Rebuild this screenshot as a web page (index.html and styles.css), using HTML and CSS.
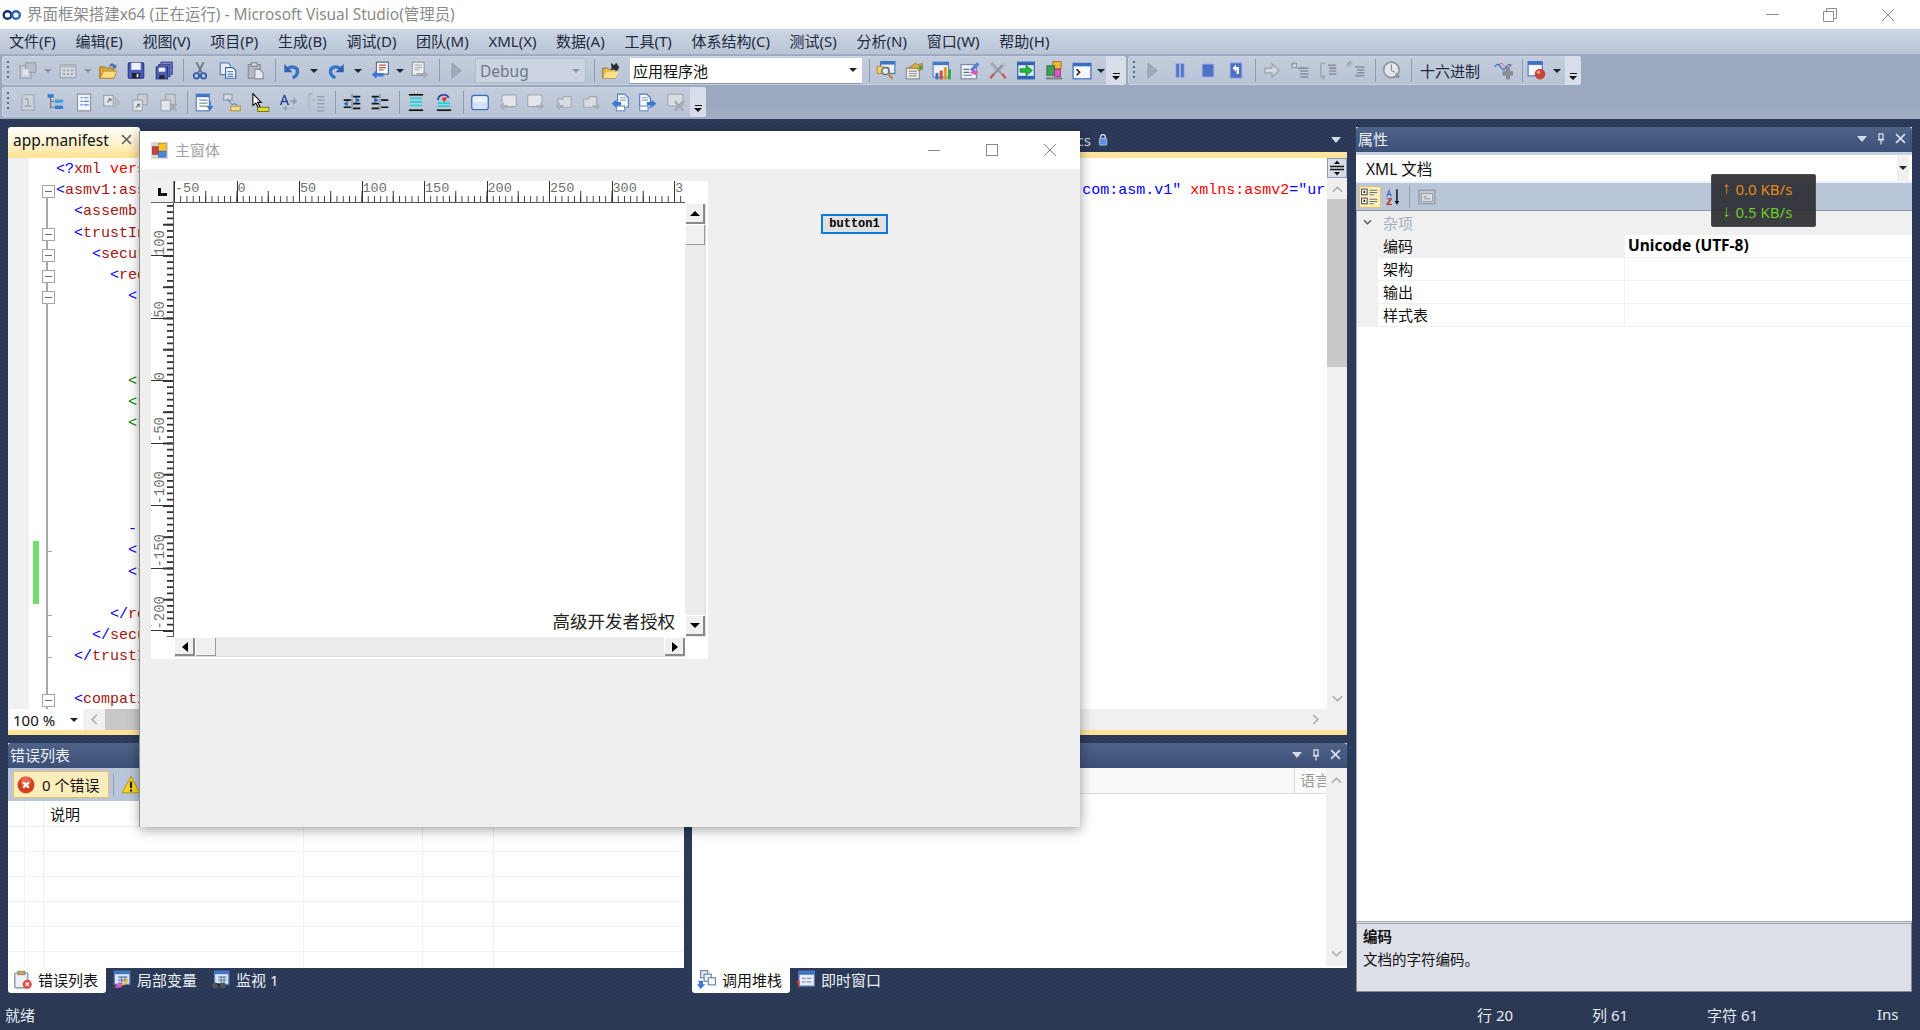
FILE: index.html
```html
<!DOCTYPE html>
<html lang="zh-CN">
<head>
<meta charset="utf-8">
<title>界面框架搭建x64 (正在运行) - Microsoft Visual Studio(管理员)</title>
<link rel="stylesheet" href="styles.css">
</head>
<body>
<svg class="defs" xmlns="http://www.w3.org/2000/svg">
<symbol id="newp" viewBox="0 0 16 16"><rect x="1.5" y="4" width="9" height="10.5" fill="#ccd1d8" stroke="#8d939d"/><rect x="6" y="1.5" width="8.5" height="8" fill="#b5bbc4" stroke="#8d939d"/><rect x="3.5" y="7" width="5" height="5" fill="#eef0f3"/></symbol>
<symbol id="addi" viewBox="0 0 16 16"><rect x="1.5" y="3" width="13" height="11" fill="#dde0e5" stroke="#979da7"/><rect x="1.5" y="3" width="13" height="2.5" fill="#aeb4bd"/><path d="M4 8h1.500M7.300 8h1.500M10.600 8h1.500M4 11h1.500M7.300 11h1.500M10.600 11h1.500" stroke="#7d838d" stroke-width="1.400"/></symbol>
<symbol id="open" viewBox="0 0 16 16"><path d="M1 5h5l1 1h6v8.500H1z" fill="#d9a93c" stroke="#9b7424" stroke-width=".8"/><path d="M1.500 14.500l2.500-6h11.500l-2.500 6z" fill="#fbdc85" stroke="#b48a2e" stroke-width=".8"/><path d="M9 3.500c1.500-2 3.500-2 5 0l1-1v3.500h-3.500l1-1c-1-1-2-1-3 0z" fill="#4a73b5"/></symbol>
<symbol id="save" viewBox="0 0 16 16"><rect x="1.500" y="1.500" width="13" height="13" rx="1" fill="#4d5db8" stroke="#2b3684"/><rect x="4" y="1.500" width="8" height="6" fill="#eef1f8"/><rect x="4.500" y="10" width="7" height="4.500" fill="#20232e"/><rect x="8.500" y="10.800" width="1.600" height="3" fill="#d9dce5"/></symbol>
<symbol id="saveall" viewBox="0 0 16 16"><rect x="5.500" y="1" width="9.500" height="10" fill="#7e89c8" stroke="#3f4a94"/><rect x="3.500" y="3" width="9.500" height="10" fill="#6672bf" stroke="#3f4a94"/><rect x="1.500" y="5" width="9.500" height="10" fill="#4d5db8" stroke="#2b3684"/><rect x="3.500" y="5.500" width="5.500" height="3.500" fill="#eef1f8"/><rect x="4" y="12" width="4.500" height="3" fill="#20232e"/></symbol>
<symbol id="cut" viewBox="0 0 16 16"><path d="M5 1l4.500 9M11 1L6.500 10" stroke="#6d7481" stroke-width="1.500" fill="none"/><circle cx="5" cy="12.500" r="2.300" fill="none" stroke="#2f5ea8" stroke-width="1.500"/><circle cx="11" cy="12.500" r="2.300" fill="none" stroke="#2f5ea8" stroke-width="1.500"/></symbol>
<symbol id="copy" viewBox="0 0 16 16"><path d="M1.500 1.500h6.500l2 2v8h-8.500z" fill="#e9effa" stroke="#5d80b8"/><path d="M6 5.500h6l2.500 2.500v6.500H6z" fill="#fff" stroke="#3d6bb0"/><path d="M7.500 9h5M7.500 11h5M7.500 13h5" stroke="#5d80b8"/></symbol>
<symbol id="paste" viewBox="0 0 16 16"><rect x="1.500" y="3" width="10" height="11.500" fill="#b3b8c0" stroke="#878d97"/><rect x="4" y="1.500" width="5" height="3" fill="#d3d6db" stroke="#878d97"/><path d="M7 7h4l3 3v5H7z" fill="#e7e9ec" stroke="#8b919b"/></symbol>
<symbol id="undo" viewBox="0 0 16 16"><path d="M4 6.500c5-3.500 9.500-.5 8.500 3.500-.5 2-2 3.500-4 4" fill="none" stroke="#3873c8" stroke-width="2.800"/><path d="M1.500 2.500v7h7z" fill="#2d63b5"/></symbol>
<symbol id="redo" viewBox="0 0 16 16"><path d="M12 6.500c-5-3.500-9.500-.5-8.500 3.500.5 2 2 3.500 4 4" fill="none" stroke="#3873c8" stroke-width="2.800"/><path d="M14.500 2.500v7h-7z" fill="#2d63b5"/></symbol>
<symbol id="nav" viewBox="0 0 16 16"><rect x="5" y="1" width="10" height="10" fill="#fff" stroke="#5a6b8a"/><path d="M7 3.500h6M7 5.500h6M7 7.500h4" stroke="#b05a50"/><path d="M1 11.500l4-3.500v2h6v3H5v2z" fill="#3a78d3"/></symbol>
<symbol id="navg" viewBox="0 0 16 16"><rect x="1.500" y="1" width="10" height="11" fill="#eef0f2" stroke="#989ea7"/><path d="M3.500 3.500h6M3.500 5.500h6M3.500 7.500h4" stroke="#a9aeb6"/><path d="M15 11.500l-4-3.500v2H5v3h6v2z" fill="#a4aab3"/></symbol>
<symbol id="play" viewBox="0 0 16 16"><path d="M4.500 1.500l8 6.500-8 6.500z" fill="#a2aab7" stroke="#8b929f" stroke-width=".5"/></symbol>
<symbol id="find" viewBox="0 0 16 16"><path d="M1 6h4l1 1h6v7.500H1z" fill="#e6b94b" stroke="#93702a" stroke-width=".8"/><path d="M1.500 14.500L4 9h10l-2 5.500z" fill="#fbdf8a"/><path d="M8 1.500l2.500 2 2-2 2.500 4-2 3-2.500-1.500-2 1z" fill="#2b2e38"/></symbol>
<symbol id="search" viewBox="0 0 16 16"><rect x="3.500" y=".5" width="12" height="10" fill="#e9eff9" stroke="#4e79b8"/><rect x="3.500" y=".5" width="12" height="2.500" fill="#3c74c6"/><path d="M.5 4.500h5l1 1h4v5h-10z" fill="#f4cd66" stroke="#a78232" stroke-width=".7"/><circle cx="7.500" cy="8.500" r="3" fill="#d9ebfb" stroke="#5d6673" stroke-width="1.200"/><path d="M9.500 10.500l4 4.500" stroke="#b78a35" stroke-width="2"/></symbol>
<symbol id="prop" viewBox="0 0 16 16"><rect x="1.500" y="6" width="11" height="9" fill="#f2f0e8" stroke="#8a8d92"/><path d="M3.500 8.500h7M3.500 10.500h7M3.500 12.500h7" stroke="#8b909a"/><path d="M3 6l6-4 3 1 3-1v5l-3 1-2-2z" fill="#d9ae44" stroke="#8d6d2a" stroke-width=".6"/><path d="M12 4h3v3h-3z" fill="#3aa24c"/></symbol>
<symbol id="chart" viewBox="0 0 16 16"><rect x=".5" y="1" width="13" height="12.500" fill="#eef3fb" stroke="#5e83bb"/><rect x=".5" y="1" width="13" height="2.500" fill="#3f78c9"/><rect x="6" y="8" width="2.500" height="7.500" fill="#d5493c"/><rect x="9.500" y="5" width="2.500" height="10.500" fill="#e49b2c"/><rect x="13" y="7" width="2.500" height="8.500" fill="#3ba44e"/><rect x="2.500" y="10" width="2.500" height="5.500" fill="#3873c8"/></symbol>
<symbol id="docp" viewBox="0 0 16 16"><rect x=".5" y="3" width="13" height="12" fill="#f1f3f8" stroke="#7d8aa0"/><path d="M2.500 7h5M2.500 9.500h5M2.500 12h7" stroke="#5c6f90"/><path d="M8 7l6-6 2 2-6 6z" fill="#4c86dc"/><path d="M8 10l3-3 4 2-2 3z" fill="#d95cc4"/></symbol>
<symbol id="tools" viewBox="0 0 16 16"><path d="M2.500 2l9 9" stroke="#9aa0a8" stroke-width="2"/><path d="M11.500 11l3 3.500" stroke="#c9574d" stroke-width="2"/><path d="M13.500 2l-9 9" stroke="#8f949c" stroke-width="2"/><path d="M4.500 11l-3 3.500" stroke="#c9574d" stroke-width="2"/><path d="M1 2l3-1 2.500 3-2 2z" fill="#a7acb4"/><path d="M10.500 2l2.500-1.500 2.500 2.500-2 2.500z" fill="#bcc0c6"/></symbol>
<symbol id="green" viewBox="0 0 16 16"><rect x="1" y="1" width="14" height="14" fill="#dfe9f8" stroke="#3560a8"/><rect x="1" y="1" width="14" height="2.500" fill="#2f62b4"/><rect x="1" y="12.500" width="14" height="2.500" fill="#2f62b4"/><path d="M3 6.500h5V3.500l5.500 4.500L8 12.500v-3H3z" fill="#22b83a" stroke="#108326" stroke-width=".6"/></symbol>
<symbol id="cls" viewBox="0 0 16 16"><rect x="7" y=".5" width="7" height="6" fill="#f2b632" stroke="#8d6c1d" stroke-width=".7"/><rect x="2" y="4" width="6.500" height="8" fill="#3f9e53" stroke="#246d35" stroke-width=".7"/><rect x="8.500" y="7" width="5" height="6" fill="#dd57c3" stroke="#9b3286" stroke-width=".7"/><rect x="1" y="13.800" width="14" height="1.700" fill="#7d7f84"/></symbol>
<symbol id="cmd" viewBox="0 0 16 16"><rect x=".5" y="2" width="15" height="13" fill="#f5f7fb" stroke="#3a6ec0"/><rect x=".5" y="2" width="15" height="2.500" fill="#3a6ec0"/><path d="M3.500 7l2.500 2.500-2.500 2.500" fill="none" stroke="#1a1a1a" stroke-width="1.300"/></symbol>
<symbol id="pause" viewBox="0 0 16 16"><rect x="4.500" y="2" width="3" height="12" fill="#5576c8" stroke="#a3b6e2" stroke-width=".6"/><rect x="8.500" y="2" width="3" height="12" fill="#5576c8" stroke="#a3b6e2" stroke-width=".6"/></symbol>
<symbol id="stop" viewBox="0 0 16 16"><rect x="3" y="2.500" width="10" height="11" fill="#4d70c4" stroke="#a3b6e2" stroke-width=".8"/></symbol>
<symbol id="restart" viewBox="0 0 16 16"><rect x="3" y="1.500" width="10" height="13" fill="#4d70c4" stroke="#a3b6e2" stroke-width=".8"/><path d="M5 6l3-3v2h2.500v6H8.500V7H8v2z" fill="#fff"/></symbol>
<symbol id="next" viewBox="0 0 16 16"><path d="M2 6h6V2.500L14 8l-6 5.500V10H2z" fill="#d6dae0" stroke="#9aa0aa"/></symbol>
<symbol id="lst1" viewBox="0 0 16 16"><path d="M5 2v3.500H1V2zM1 3.800l2.500-2.800" fill="#cfd3d9" stroke="#979da7"/><path d="M6 6h9M8 8.500h7M8 11h7M8 13.500h7" stroke="#8a909a" stroke-width="1.300"/></symbol>
<symbol id="lst2" viewBox="0 0 16 16"><path d="M2 2h4M2 2v11l3 2.500M2 13h4" fill="none" stroke="#a4aab3" stroke-width="1.500"/><path d="M8 3.500h7M9 6h6M9 8.500h6M9 11h6" stroke="#8a909a" stroke-width="1.300"/></symbol>
<symbol id="lst3" viewBox="0 0 16 16"><path d="M1 5V2h4M3 0v4" fill="none" stroke="#a4aab3" stroke-width="1.400"/><path d="M7 5h8M9 7.500h6M9 10h6M7 12.500h8" stroke="#8a909a" stroke-width="1.300"/></symbol>
<symbol id="clock" viewBox="0 0 16 16"><circle cx="7.500" cy="7.500" r="6.500" fill="#e4e6ea" stroke="#8f959f" stroke-width="1.400"/><path d="M7.500 3v5l3 1.500" fill="none" stroke="#8b919b"/><path d="M10 14l2-5 3 5z" fill="#8f959f"/></symbol>
<symbol id="wave" viewBox="0 0 16 16"><path d="M1 5c2-3 3-3 5 0s3 3 5 0 3-2 4-1" fill="none" stroke="#3f7ad0" stroke-width="1.300"/><path d="M4 4c2-2.500 3-2.500 5 0s3 2.500 6 0" fill="none" stroke="#d24a3e" stroke-width=".8"/><path d="M8 9h3V6.500h2.500V9H16v3h-2.500v3H11v-3H8z" fill="#8b919a" stroke="#6c727b" stroke-width=".5"/></symbol>
<symbol id="bp" viewBox="0 0 16 16"><rect x=".5" y=".5" width="12" height="12" fill="#f3f6fc" stroke="#4d7cc6"/><rect x=".5" y=".5" width="12" height="2.800" fill="#3b72c8"/><circle cx="10.500" cy="11" r="4.500" fill="#c9443a"/><circle cx="9.300" cy="9.500" r="1.400" fill="#f0a59e"/></symbol>
<symbol id="g1" viewBox="0 0 16 16"><rect x="3" y="1.500" width="10" height="13" fill="#d5d8dd" stroke="#999fa9"/><path d="M5 5h3M8 5v6M5 11h6" stroke="#8a909a" fill="none"/><path d="M1 1h4v3H1z" fill="#bfc3ca"/></symbol>
<symbol id="tree" viewBox="0 0 16 16"><rect x="1" y="1" width="5" height="3" fill="#3d78cc"/><path d="M3.500 4v9M3.500 7h3M3.500 12h3" stroke="#6d7787"/><rect x="7" y="5.500" width="7" height="3" fill="#45a1d6"/><rect x="7" y="10.500" width="7" height="3" fill="#3d78cc"/><rect x="11" y="8" width="3" height="2.500" fill="#a1c4ea"/></symbol>
<symbol id="lst" viewBox="0 0 16 16"><rect x="2.500" y="1" width="11" height="14" fill="#f3f5f9" stroke="#8f96a2"/><path d="M5 4h2M8 4h4M5 7h2M8 7h4M5 10h2M8 10h4" stroke="#4f86d8"/></symbol>
<symbol id="bxa" viewBox="0 0 16 16"><rect x="1" y="2" width="8" height="9" fill="#e1e4e9" stroke="#a0a6b0"/><path d="M4 8l3-3M5 5h2v2" stroke="#777d87" fill="none"/><path d="M10 2l5.500 6-5.500 6z" fill="#b3b8c0"/></symbol>
<symbol id="bxb" viewBox="0 0 16 16"><rect x="6" y="1" width="8" height="9" fill="#c9cdd4" stroke="#a0a6b0"/><rect x="2" y="6" width="8" height="9" fill="#e1e4e9" stroke="#a0a6b0"/><path d="M4.500 12.500l3-3M5.500 9.500h2v2" stroke="#777d87" fill="none"/></symbol>
<symbol id="bxc" viewBox="0 0 16 16"><rect x="6" y="1" width="8" height="9" fill="#c9cdd4" stroke="#a0a6b0"/><rect x="2" y="6" width="8" height="9" fill="#e1e4e9" stroke="#a0a6b0"/><path d="M10 9l5 6M15 9l-5 6" stroke="#a0a6b0" stroke-width="1.600"/></symbol>
<symbol id="wnd" viewBox="0 0 16 16"><rect x="1.500" y="1" width="11" height="14" fill="#fff" stroke="#5a82c0"/><rect x="1.500" y="1" width="11" height="2.500" fill="#3c74c6"/><path d="M4 6h7M4 8.500h7M4 11h7" stroke="#7f8ca0"/><path d="M13 7v6M11 11l2 3 2-3" stroke="#3c74c6" fill="none" stroke-width="1.400"/></symbol>
<symbol id="ctx" viewBox="0 0 16 16"><rect x="1" y="1" width="7" height="5" fill="#d9dde3" stroke="#959ba5"/><path d="M4 5l4 5 2-1 2 1-3 3" fill="#f2f4f7" stroke="#5c8bc9"/><rect x="7" y="11" width="8" height="4" fill="#eedd95" stroke="#b29b3d"/></symbol>
<symbol id="sel" viewBox="0 0 16 16"><path d="M2 .5v10l2.500-2 2 4 1.500-.8-2-3.800h3z" fill="#fff" stroke="#000" stroke-width=".9"/><rect x="6" y="12" width="9.500" height="3.500" fill="#e8dc2a" stroke="#5f6b17" stroke-width=".7"/></symbol>
<symbol id="az" viewBox="0 0 16 16"><path d="M4.500 1.500L1 10h1.500l.8-2.200h3.400L7.500 10H9L5.500 1.500zM3.800 6.500L5 3.200 6.200 6.500z" fill="#26468f"/><path d="M10 7h5" stroke="#8c9aaf" stroke-width="1.400"/><path d="M12.500 4l3 3-3 3z" fill="#8c9aaf"/><path d="M4 13h3.500M6 11v4" stroke="#8c9aaf"/><path d="M9 13h6" stroke="#aab3c3" stroke-dasharray="2 1"/></symbol>
<symbol id="cols" viewBox="0 0 16 16"><path d="M2 3V1h3M9 3h6M9 6h6M9 9h6M9 12h6M9 15h6" stroke="#959ba5" fill="none"/><path d="M2 1v14" stroke="#b6bbc3" stroke-width="1.400"/><path d="M5 6h2" stroke="#959ba5"/></symbol>
<symbol id="ind1" viewBox="0 0 16 16"><path d="M8 1v14" stroke="#555" stroke-dasharray="1 1"/><path d="M9 3h6M9 9h6M9 13h6M1 6h6M1 12h6" stroke="#111" stroke-width="1.400"/><path d="M1 9l3.500-2.500v5zM15 6l-4-2.500v5z" fill="#2f6cc0"/></symbol>
<symbol id="ind2" viewBox="0 0 16 16"><path d="M8 1v14" stroke="#555" stroke-dasharray="1 1"/><path d="M1 3h6M1 9h6M1 13h6M9 6h6M9 12h6" stroke="#111" stroke-width="1.400"/><path d="M7 6l-4-2.500v5z" fill="#2f6cc0"/></symbol>
<symbol id="cmt1" viewBox="0 0 16 16"><path d="M2 1.500h12" stroke="#111" stroke-width="1.400"/><path d="M3 4.500h10M3 7.500h10M3 10.500h10" stroke="#16d6d6" stroke-width="1.400"/><path d="M2 14.500h12" stroke="#111" stroke-width="1.400"/></symbol>
<symbol id="cmt2" viewBox="0 0 16 16"><path d="M3 6c0-5 7-6 9-2" fill="none" stroke="#23479c" stroke-width="1.400"/><path d="M8 8L6 4l5-.5z" fill="#d33"/><path d="M3 8.500h10M3 11h10" stroke="#16d6d6" stroke-width="1.400"/><path d="M2 14.500h12" stroke="#111" stroke-width="1.400"/></symbol>
<symbol id="shp" viewBox="0 0 16 16"><rect x="1" y="2" width="14" height="12" rx="2" fill="#d4e1f6" stroke="#3e6fc0"/><rect x="2.500" y="3.500" width="11" height="4" rx="1" fill="#eef4fc"/></symbol>
<symbol id="bl" viewBox="0 0 16 16"><rect x="3" y="1.500" width="12" height="10" rx="1.500" fill="#e3e6ea" stroke="#a4aab3"/><path d="M1 11l3.500-3v2h3v2.500h-3v2.500z" fill="#a9afb8"/></symbol>
<symbol id="br" viewBox="0 0 16 16"><rect x="1" y="1.500" width="12" height="10" rx="1.500" fill="#e3e6ea" stroke="#a4aab3"/><path d="M15 11l-3.500-3v2h-3v2.500h3v2.500z" fill="#a9afb8"/></symbol>
<symbol id="fl" viewBox="0 0 16 16"><path d="M3 5h4l1-2h6v9H3z" fill="#d9dce1" stroke="#a4aab3"/><path d="M1 11l3.500-3v2h3v2.500h-3v2.500z" fill="#a9afb8"/></symbol>
<symbol id="fr" viewBox="0 0 16 16"><path d="M1 5h4l1-2h6v9H1z" fill="#d9dce1" stroke="#a4aab3"/><path d="M15 11l-3.500-3v2h-3v2.500h3v2.500z" fill="#a9afb8"/></symbol>
<symbol id="bkl" viewBox="0 0 16 16"><path d="M6 1h6l3 3v8H6z" fill="#fff" stroke="#4d7cc6"/><path d="M8 4h5M8 6h5" stroke="#7f9bd6"/><rect x="5" y="11" width="7" height="4" fill="#fff" stroke="#6f8fc7"/><path d="M1 9l4-3.500v2h4v3H5v2z" fill="#3a78d3"/></symbol>
<symbol id="bkr" viewBox="0 0 16 16"><path d="M1 1h6l3 3v8H1z" fill="#fff" stroke="#4d7cc6"/><path d="M3 4h5M3 6h5" stroke="#7f9bd6"/><rect x="1" y="11" width="7" height="4" fill="#fff" stroke="#6f8fc7"/><path d="M15 9l-4-3.500v2H7v3h4v2z" fill="#3a78d3"/></symbol>
<symbol id="srchg" viewBox="0 0 16 16"><rect x="1" y="1" width="13" height="10" rx="1.500" fill="#d9dce1" stroke="#a4aab3"/><path d="M7 7l7 8M14 7l-7 8" stroke="#a4aab3" stroke-width="2"/></symbol>
<symbol id="err" viewBox="0 0 16 16"><circle cx="8" cy="8" r="7.500" fill="#d4401f"/><circle cx="8" cy="5" r="4.500" fill="#ee7b5c" opacity=".7"/><path d="M5.500 5.500l5 5M10.500 5.500l-5 5" stroke="#fff" stroke-width="2"/></symbol>
<symbol id="warn" viewBox="0 0 16 16"><path d="M8 1l7.500 14H.5z" fill="#f7d81d" stroke="#aa8a10" stroke-width=".7"/><path d="M8 5.500v5.500" stroke="#222" stroke-width="1.800"/><circle cx="8" cy="13" r="1" fill="#222"/></symbol>
<symbol id="tberr" viewBox="0 0 16 16"><rect x="1.500" y="2.500" width="11" height="12.500" rx="1" fill="#eef1f6" stroke="#7b8699"/><rect x="4" y="1" width="6" height="3" fill="#c3a96a" stroke="#8a7640" stroke-width=".6"/><circle cx="12" cy="12" r="3.800" fill="#e3473e"/><path d="M10.500 10.500l3 3M13.500 10.500l-3 3" stroke="#fff"/></symbol>
<symbol id="tbloc" viewBox="0 0 16 16"><rect x="2" y="1" width="13" height="11" fill="#dbe5f7" stroke="#5c83c2"/><rect x="2" y="1" width="13" height="2.500" fill="#3f74c8"/><path d="M5 6h8M5 8.500h8M8 5v6M11 5v6" stroke="#6a80a8"/><path d="M2 15l4-5 4 2-3 3z" fill="#d55cc0"/><path d="M8 12l5-5 1 2-4 4z" fill="#e4bd44"/></symbol>
<symbol id="tbw" viewBox="0 0 16 16"><rect x="3" y="1" width="12" height="11" fill="#dbe5f7" stroke="#5c83c2"/><rect x="3" y="1" width="12" height="2.500" fill="#3f74c8"/><path d="M6 6h7M6 8.500h7M8.500 5v6M11 5v6" stroke="#6a80a8"/><circle cx="3.500" cy="13" r="2.500" fill="#50555e"/><circle cx="10" cy="13" r="2.500" fill="#50555e"/><path d="M5 12h3" stroke="#222" stroke-width="1.500"/></symbol>
<symbol id="tbc" viewBox="0 0 16 16"><rect x="3" y=".5" width="6" height="6" fill="#e1e7f2" stroke="#7288ad"/><rect x="6" y="3.500" width="6" height="6" fill="#eef2f8" stroke="#7288ad"/><rect x="9.500" y="6.500" width="6" height="6" fill="#fff" stroke="#7288ad"/><path d="M1 9h4v3h2l-4 4-3-4h2z" fill="#3a78d3"/></symbol>
<symbol id="tbi" viewBox="0 0 16 16"><rect x="2.500" y="1" width="13" height="12.500" fill="#e8eef8" stroke="#5c83c2"/><rect x="2.500" y="1" width="13" height="3" fill="#3f74c8"/><path d="M5 7h3M9 7h4M5 10h3M9 10h4" stroke="#8a95a8"/><path d="M.5 9h2.500v3L2.500 15z" fill="#e23b2e"/></symbol>
<symbol id="cat" viewBox="0 0 16 16"><rect x=".5" y="1" width="5" height="5" fill="#fff" stroke="#555"/><path d="M2 3.500h2M3 2.500v2" stroke="#222"/><rect x=".5" y="9" width="5" height="5" fill="#fff" stroke="#555"/><path d="M2 11.500h2M3 10.500v2" stroke="#222"/><path d="M7.500 2h7M7.500 4h7M7.500 6h4M7.500 10h7M7.500 12h7M7.500 14h4" stroke="#6a7383" stroke-width="1"/></symbol>
<symbol id="azs" viewBox="0 0 16 16"><path d="M11.500 1v12" stroke="#111" stroke-width="1.300"/><path d="M9.500 11.500h4l-2 3.500z" fill="#111"/><path d="M4.500 1l2.500 6.500H6L5.500 6h-2L3 7.500H2zM3.800 5h1.400L4.500 3z" fill="#2c58b5"/><path d="M2.500 9H7v1L4 14h3v1H2.200v-1L5.200 10H2.500z" fill="#b5342a"/></symbol>
<symbol id="ppg" viewBox="0 0 16 16"><rect x="1" y="2" width="14" height="12" fill="#c3c9d2" stroke="#8d939d"/><rect x="3" y="5" width="10" height="7" fill="#dfe2e7" stroke="#9ba1ab"/><path d="M5 7.500h3M5 9.500h6" stroke="#8d939d"/></symbol>
<symbol id="lock" viewBox="0 0 16 20"><path d="M4.500 9V5.500a3.500 3.500 0 0 1 7 0V9" fill="none" stroke="#e4e8f0" stroke-width="2"/><rect x="2" y="8" width="12" height="11" rx="1.500" fill="#5e8ede" stroke="#dbe3f2"/></symbol>
<symbol id="pin" viewBox="0 0 10 16"><path d="M2.500 1.500h5v7h-5zM1 9h8M5 9v6" fill="none" stroke="#d8dfea" stroke-width="1.600"/></symbol>
<symbol id="x" viewBox="0 0 10 10"><path d="M1 1l8 8M9 1l-8 8" stroke="#d8dfea" stroke-width="1.600"/></symbol>
<symbol id="formic" viewBox="0 0 18 18"><rect width="18" height="18" fill="#d8d8d8"/><rect x="8" y="1.500" width="8" height="8" fill="#f6c52c" stroke="#a37f13" stroke-width=".6"/><rect x="1.500" y="5" width="6" height="8" fill="#c94136" stroke="#7f2a23" stroke-width=".6"/><rect x="8" y="10" width="8" height="6" fill="#4b86db" stroke="#2c5aa3" stroke-width=".6"/></symbol>
<symbol id="vs" viewBox="0 0 20 12"><circle cx="5.500" cy="6" r="3.800" fill="none" stroke="#15316f" stroke-width="2.400"/><circle cx="14" cy="6" r="3.800" fill="none" stroke="#2c62b9" stroke-width="2.400"/></symbol>
</svg>

<div class="app">
<header class="titlebar">
  <svg class="vslogo"><use href="#vs"/></svg>
  <span class="apptitle">界面框架搭建x64 (正在运行) - Microsoft Visual Studio(管理员)</span>
  <div class="winctl">
    <span class="wc wc-min"></span>
    <svg class="wc-svg" viewBox="0 0 14 14"><path d="M.5 3.500h10v10H.5zM3.500 3.500v-3h10v10h-3" fill="none" stroke="#8e8e8e"/></svg>
    <svg class="wc-svg" viewBox="0 0 14 14"><path d="M1 1l12 12M13 1L1 13" fill="none" stroke="#8e8e8e"/></svg>
  </div>
</header>

<nav class="menubar">
  <span>文件(F)</span><span>编辑(E)</span><span>视图(V)</span><span>项目(P)</span><span>生成(B)</span><span>调试(D)</span><span>团队(M)</span><span>XML(X)</span><span>数据(A)</span><span>工具(T)</span><span>体系结构(C)</span><span>测试(S)</span><span>分析(N)</span><span>窗口(W)</span><span>帮助(H)</span>
</nav>

<section class="toolbars">
  <div class="tbrow">
    <div class="tb tb-a">
      <i class="grip"></i>
      <b class="ic dim"><svg><use href="#newp"/></svg></b><u class="dd dim"></u>
      <b class="ic dim"><svg><use href="#addi"/></svg></b><u class="dd dim"></u>
      <b class="ic"><svg><use href="#open"/></svg></b>
      <b class="ic"><svg><use href="#save"/></svg></b>
      <b class="ic"><svg><use href="#saveall"/></svg></b>
      <i class="sep"></i>
      <b class="ic"><svg><use href="#cut"/></svg></b>
      <b class="ic"><svg><use href="#copy"/></svg></b>
      <b class="ic"><svg><use href="#paste"/></svg></b>
      <i class="sep"></i>
      <b class="ic"><svg><use href="#undo"/></svg></b><u class="dd w16"></u>
      <b class="ic"><svg><use href="#redo"/></svg></b><u class="dd w16"></u>
      <b class="ic"><svg><use href="#nav"/></svg></b><u class="dd"></u>
      <b class="ic"><svg><use href="#navg"/></svg></b>
      <i class="sep"></i>
      <b class="ic"><svg><use href="#play"/></svg></b>
      <div class="combo combo-dbg"><span>Debug</span><u class="dd dim"></u></div>
      <i class="sep sep-wide"></i>
      <b class="ic"><svg><use href="#find"/></svg></b>
      <div class="combo combo-pool"><span>应用程序池</span><u class="dd"></u></div>
      <i class="sep sep-mid"></i>
      <b class="ic"><svg><use href="#search"/></svg></b>
      <b class="ic"><svg><use href="#prop"/></svg></b>
      <b class="ic"><svg><use href="#chart"/></svg></b>
      <b class="ic"><svg><use href="#docp"/></svg></b>
      <b class="ic"><svg><use href="#tools"/></svg></b>
      <b class="ic"><svg><use href="#green"/></svg></b>
      <b class="ic"><svg><use href="#cls"/></svg></b>
      <b class="ic"><svg><use href="#cmd"/></svg></b><u class="dd w10"></u>
      <span class="ovf"><i></i><u></u></span>
    </div>
    <div class="tb tb-b">
      <i class="grip"></i>
      <b class="ic"><svg><use href="#play"/></svg></b>
      <b class="ic"><svg><use href="#pause"/></svg></b>
      <b class="ic"><svg><use href="#stop"/></svg></b>
      <b class="ic"><svg><use href="#restart"/></svg></b>
      <i class="sep"></i>
      <b class="ic"><svg><use href="#next"/></svg></b>
      <b class="ic"><svg><use href="#lst1"/></svg></b>
      <b class="ic"><svg><use href="#lst2"/></svg></b>
      <b class="ic"><svg><use href="#lst3"/></svg></b>
      <i class="sep"></i>
      <b class="ic"><svg><use href="#clock"/></svg></b>
      <i class="sep"></i>
      <span class="hex">十六进制</span>
      <b class="ic"><svg><use href="#wave"/></svg></b>
      <i class="sep"></i>
      <b class="ic ic-n"><svg><use href="#bp"/></svg></b><u class="dd w16"></u>
      <span class="ovf ovf-n"><i></i><u></u></span>
    </div>
  </div>
  <div class="tbrow">
    <div class="tb tb-a">
      <i class="grip"></i>
      <b class="ic dim"><svg><use href="#g1"/></svg></b>
      <b class="ic"><svg><use href="#tree"/></svg></b>
      <b class="ic"><svg><use href="#lst"/></svg></b>
      <b class="ic"><svg><use href="#bxa"/></svg></b>
      <b class="ic"><svg><use href="#bxb"/></svg></b>
      <b class="ic"><svg><use href="#bxc"/></svg></b>
      <i class="sep"></i>
      <b class="ic"><svg><use href="#wnd"/></svg></b>
      <b class="ic"><svg><use href="#ctx"/></svg></b>
      <b class="ic"><svg><use href="#sel"/></svg></b>
      <b class="ic"><svg><use href="#az"/></svg></b>
      <b class="ic"><svg><use href="#cols"/></svg></b>
      <i class="sep"></i>
      <b class="ic"><svg><use href="#ind1"/></svg></b>
      <b class="ic"><svg><use href="#ind2"/></svg></b>
      <i class="sep"></i>
      <b class="ic"><svg><use href="#cmt1"/></svg></b>
      <b class="ic"><svg><use href="#cmt2"/></svg></b>
      <i class="sep"></i>
      <b class="ic"><svg><use href="#shp"/></svg></b>
      <b class="ic"><svg><use href="#bl"/></svg></b>
      <b class="ic"><svg><use href="#br"/></svg></b>
      <b class="ic"><svg><use href="#fl"/></svg></b>
      <b class="ic"><svg><use href="#fr"/></svg></b>
      <b class="ic"><svg><use href="#bkl"/></svg></b>
      <b class="ic"><svg><use href="#bkr"/></svg></b>
      <b class="ic"><svg><use href="#srchg"/></svg></b>
      <span class="ovf ovf-n"><i></i><u></u></span>
    </div>
  </div>
</section>

<main class="workspace">
  <div class="leftcol">
    <section class="editor">
      <div class="tabstrip">
        <div class="doctab"><span>app.manifest</span><svg class="docx" viewBox="0 0 10 10"><path d="M1 1l8 8M9 1l-8 8" stroke="#6a6a6a" stroke-width="1.500"/></svg></div>
        <div class="doctab2"><span>cs</span><svg class="lockic"><use href="#lock"/></svg></div>
        <u class="tri"></u>
      </div>
      <div class="yband"></div>
      <div class="editmain">
        <div class="codewrap">
          <i class="changebar"></i>
          <div class="code">
<div class="ln"><span class="g"></span><code><em class="b">&lt;?</em><em class="n">xml</em> <em class="a">vers</em></code></div>
<div class="ln"><span class="g box"></span><code><em class="b">&lt;</em><em class="n">asmv1:ass</em>                                                                                                        <em class="b">com:asm.v1"</em> <em class="a">xmlns:asmv2</em><em class="b">="ur</em></code></div>
<div class="ln"><span class="g ln-v"></span><code>  <em class="b">&lt;</em><em class="n">assembl</em></code></div>
<div class="ln"><span class="g box"></span><code>  <em class="b">&lt;</em><em class="n">trustIn</em></code></div>
<div class="ln"><span class="g box"></span><code>    <em class="b">&lt;</em><em class="n">secur</em></code></div>
<div class="ln"><span class="g box"></span><code>      <em class="b">&lt;</em><em class="n">req</em></code></div>
<div class="ln"><span class="g box"></span><code>        <em class="b">&lt;</em></code></div>
<div class="ln"><span class="g ln-v"></span><code> </code></div>
<div class="ln"><span class="g ln-v"></span><code> </code></div>
<div class="ln"><span class="g ln-v"></span><code> </code></div>
<div class="ln"><span class="g ln-v"></span><code>        <em class="c">&lt;r</em></code></div>
<div class="ln"><span class="g ln-v"></span><code>        <em class="c">&lt;r</em></code></div>
<div class="ln"><span class="g ln-v"></span><code>        <em class="c">&lt;r</em></code></div>
<div class="ln"><span class="g ln-v"></span><code> </code></div>
<div class="ln"><span class="g ln-v"></span><code> </code></div>
<div class="ln"><span class="g ln-v"></span><code> </code></div>
<div class="ln"><span class="g ln-v"></span><code> </code></div>
<div class="ln"><span class="g ln-v"></span><code>        <em class="b">--</em></code></div>
<div class="ln"><span class="g ln-v end"></span><code>        <em class="b">&lt;</em></code></div>
<div class="ln"><span class="g ln-v"></span><code>        <em class="b">&lt;</em><em class="n">r</em></code></div>
<div class="ln"><span class="g ln-v"></span><code> </code></div>
<div class="ln"><span class="g ln-v end"></span><code>      <em class="b">&lt;/</em><em class="n">re</em></code></div>
<div class="ln"><span class="g ln-v end"></span><code>    <em class="b">&lt;/</em><em class="n">secu</em></code></div>
<div class="ln"><span class="g ln-v end"></span><code>  <em class="b">&lt;/</em><em class="n">trustI</em></code></div>
<div class="ln"><span class="g ln-v"></span><code> </code></div>
<div class="ln"><span class="g box"></span><code>  <em class="b">&lt;</em><em class="n">compati</em></code></div>
          </div>
        </div>
        <div class="vscroll">
          <div class="splitbtn"><svg viewBox="0 0 16 16"><path d="M1 6.500h14M1 9.500h14" stroke="#111" stroke-width="1.400"/><path d="M8 .5L5 4h6zM8 15.500L5 12h6z" fill="#111"/></svg></div>
          <div class="arr"><svg viewBox="0 0 12 8"><path d="M1 7l5-5 5 5" fill="none" stroke="#a8a8a8" stroke-width="1.600"/></svg></div>
          <div class="vthumb"></div>
          <div class="vrest"></div>
          <div class="arr"><svg viewBox="0 0 12 8"><path d="M1 1l5 5 5-5" fill="none" stroke="#a8a8a8" stroke-width="1.600"/></svg></div>
        </div>
      </div>
      <div class="hbar">
        <div class="zoomcombo"><span>100 %</span><u class="dd"></u></div>
        <div class="harr"><svg viewBox="0 0 8 12"><path d="M7 1L2 6l5 5" fill="none" stroke="#a8a8a8" stroke-width="1.600"/></svg></div>
        <div class="hthumb"></div>
        <div class="hrest"></div>
        <div class="harr harr-r"><svg viewBox="0 0 8 12"><path d="M1 1l5 5-5 5" fill="none" stroke="#a8a8a8" stroke-width="1.600"/></svg></div>
      </div>
      <div class="yband2"></div>
    </section>

    <div class="lower">
      <div class="dock dock-l">
        <section class="panel">
          <div class="phead"><span>错误列表</span></div>
          <div class="errbar">
            <div class="errbtn"><svg><use href="#err"/></svg><span>0 个错误</span></div>
            <i class="esep"></i>
            <svg class="warnic"><use href="#warn"/></svg>
          </div>
          <div class="errgrid">
            <div class="errhead">说明</div>
            <div class="row"></div><div class="row"></div><div class="row"></div><div class="row"></div><div class="row"></div><div class="row"></div>
          </div>
        </section>
        <div class="btabs">
          <div class="btab on"><svg><use href="#tberr"/></svg><span>错误列表</span></div>
          <div class="btab"><svg><use href="#tbloc"/></svg><span>局部变量</span></div>
          <div class="btab"><svg><use href="#tbw"/></svg><span>监视 1</span></div>
        </div>
      </div>
      <div class="dock dock-r">
        <section class="panel">
          <div class="phead"><div class="ptools"><u class="tri"></u><svg class="pinic"><use href="#pin"/></svg><svg class="xic"><use href="#x"/></svg></div></div>
          <div class="callbody">
            <div class="callmain">
              <div class="callhead"><span class="c1"></span><span class="c2">语言</span></div>
            </div>
            <div class="vs2">
              <svg viewBox="0 0 12 8"><path d="M1 7l5-5 5 5" fill="none" stroke="#a8a8a8" stroke-width="1.600"/></svg>
              <svg viewBox="0 0 12 8"><path d="M1 1l5 5 5-5" fill="none" stroke="#a8a8a8" stroke-width="1.600"/></svg>
            </div>
          </div>
        </section>
        <div class="btabs">
          <div class="btab on"><svg><use href="#tbc"/></svg><span>调用堆栈</span></div>
          <div class="btab"><svg><use href="#tbi"/></svg><span>即时窗口</span></div>
        </div>
      </div>
    </div>
  </div>

  <aside class="props">
    <div class="phead"><span>属性</span><div class="ptools"><u class="tri"></u><svg class="pinic"><use href="#pin"/></svg><svg class="xic"><use href="#x"/></svg></div></div>
    <div class="objcombo"><span>XML 文档</span><div class="objbtn"><u class="dd"></u></div></div>
    <div class="proptb">
      <div class="ptbtn on"><svg><use href="#cat"/></svg></div>
      <div class="ptbtn"><svg><use href="#azs"/></svg></div>
      <i class="esep"></i>
      <div class="ptbtn"><svg><use href="#ppg"/></svg></div>
    </div>
    <div class="propgrid">
      <div class="pcat"><svg viewBox="0 0 10 6"><path d="M1 1l4 4 4-4" fill="none" stroke="#555" stroke-width="1.500"/></svg><span>杂项</span></div>
      <div class="prow sel"><span class="pk">编码</span><span class="pv">Unicode (UTF-8)</span></div>
      <div class="prow"><span class="pk">架构</span><span class="pv"></span></div>
      <div class="prow"><span class="pk">输出</span><span class="pv"></span></div>
      <div class="prow"><span class="pk">样式表</span><span class="pv"></span></div>
    </div>
    <div class="propdesc">
      <strong>编码</strong>
      <p>文档的字符编码。</p>
    </div>
  </aside>
</main>

<footer class="status">
  <span class="st0">就绪</span>
  <span class="st1">行 20</span>
  <span class="st2">列 61</span>
  <span class="st3">字符 61</span>
  <span class="st4">Ins</span>
</footer>
</div>

<div class="formwin">
  <div class="formtitle">
    <svg class="formic"><use href="#formic"/></svg>
    <span>主窗体</span>
    <div class="formctl">
      <span class="fm"></span>
      <span class="fx"></span>
      <svg viewBox="0 0 12 12"><path d="M0 0l12 12M12 0L0 12" stroke="#8a8a8a" fill="none"/></svg>
    </div>
  </div>
  <div class="formbody">
    <div class="rulerbox">
      <div class="rtop">
        <div class="corner"><i></i></div>
        <div class="hruler">
          <span>-50</span><span>0</span><span>50</span><span>100</span><span>150</span><span>200</span><span>250</span><span>300</span><span>3</span>
        </div>
      </div>
      <div class="rmid">
        <div class="vruler">
          <span class="v1"><em>100</em></span><span><em>50</em></span><span><em>0</em></span><span><em>-50</em></span><span><em>-100</em></span><span><em>-150</em></span><span><em>-200</em></span>
        </div>
        <div class="canvas"><span class="lic">高级开发者授权</span></div>
        <div class="sbv">
          <div class="sbtn"><u class="up"></u></div>
          <div class="sthumb"></div>
          <div class="strack"></div>
          <div class="sbtn"><u></u></div>
        </div>
      </div>
      <div class="rbot">
        <div class="sbh">
          <div class="sbtn"><u class="lf"></u></div>
          <div class="sthumb"></div>
          <div class="strack"></div>
          <div class="sbtn"><u class="rt"></u></div>
        </div>
      </div>
    </div>
    <div class="btn1">button1</div>
  </div>
</div>

<div class="netspeed">
  <div class="up"><span class="ar">↑</span><span>0.0 KB/s</span></div>
  <div class="down"><span class="ar">↓</span><span>0.5 KB/s</span></div>
</div>
</body>
</html>
```

FILE: styles.css
```css
* { box-sizing: border-box; }
html, body { margin: 0; padding: 0; width: 1920px; height: 1030px; overflow: hidden; }
body { font-family: "Noto Sans", "Noto Sans CJK SC", sans-serif; font-size: 15px; color: #111; position: relative; background: #fff; }
.defs { width: 0; height: 0; position: absolute; }
.app { display: flex; flex-direction: column; height: 1030px; }

.titlebar { height: 29px; background: #fff; display: flex; align-items: center; flex: none; }
.vslogo { width: 20px; height: 12px; margin-left: 2px; }
.apptitle { margin-left: 5px; color: #8a8a8a; font-size: 15.45px; padding-bottom: 2px; }
.winctl { margin-left: auto; display: flex; align-items: center; gap: 44px; padding-right: 25px; }
.wc-min { width: 13px; height: 1px; background: #8e8e8e; display: block; }
.wc-svg { width: 14px; height: 14px; display: block; }

.menubar { height: 26px; flex: none; display: flex; align-items: center; gap: 19.7px; padding: 0 0 2px 9px; background: linear-gradient(#cdd6e4, #b9c4d6); border-bottom: 1px solid #a3aec3; color: #1d2a40; white-space: nowrap; }

.toolbars { height: 64px; flex: none; background: linear-gradient(#9ca9bf, #9ca9bf 80%, #a2aec3); padding-top: 1px; display: flex; flex-direction: column; gap: 2px; }
.tbrow { display: flex; gap: 2px; padding-left: 2px; height: 29px; }
.tbrow + .tbrow { height: 30px; }
.tb { display: flex; align-items: center; height: 100%; background: linear-gradient(#c4cddd, #b8c3d6); border-radius: 3px; box-shadow: inset 0 0 0 1px rgba(205,213,228,.7); position: relative; }
.tb-a { padding-left: 12px; }
.tb-b { padding-left: 10px; }
.grip { position: absolute; left: 5px; top: 5px; bottom: 5px; width: 2px; background: repeating-linear-gradient(#5f6b80 0 2px, transparent 2px 5px); }
.ic { width: 28px; height: 100%; flex: none; display: flex; align-items: center; justify-content: center; font-weight: normal; }
.ic svg { width: 20px; height: 19px; display: block; }
.ic-n { width: 24px; }
.dim { opacity: .75; }
.dd { flex: none; width: 12px; display: flex; align-items: center; justify-content: center; text-decoration: none; height: 100%; }
.dd::before { content: ""; border-left: 4px solid transparent; border-right: 4px solid transparent; border-top: 4px solid #1e2530; }
.dd.w16 { width: 16px; }
.dd.w10 { width: 10px; }
.dd.dim::before { border-top-color: #7b8493; }
.sep { flex: none; width: 1px; height: 23px; background: #8f9ab0; margin: 0 2px 0 5px; }
.sep-wide { margin-left: 8px; }
.sep-mid { margin-left: 7px; }
.ovf { flex: none; width: 20px; height: 100%; background: #d7deea; display: flex; flex-direction: column; align-items: center; justify-content: flex-end; padding-bottom: 5px; gap: 2px; border-radius: 0 3px 3px 0; }
.ovf-n { width: 16px; }
.ovf i { width: 7px; height: 1px; background: #111; }
.ovf u { border-left: 4px solid transparent; border-right: 4px solid transparent; border-top: 4px solid #111; }
.combo { flex: none; height: 25px; display: flex; align-items: center; justify-content: space-between; }
.combo-dbg { width: 111px; margin-left: 5px; background: #ccd4e1; border: 1px solid #b1bbcc; border-radius: 2px; color: #6f7888; font-size: 15.5px; padding-left: 4px; }
.combo-dbg .dd { width: 18px; }
.combo-pool { width: 232px; margin-left: 5px; height: 26px; background: #fff; border-bottom: 1px solid #8d98ab; color: #111; font-size: 15px; padding-left: 3px; }
.combo-pool .dd { width: 18px; }
.hex { margin-left: 6px; margin-right: 9px; width: 60px; flex: none; font-size: 15px; white-space: nowrap; color: #1c2638; }

.workspace { flex: 1; min-height: 0; background: repeating-conic-gradient(#2e3d5c 0 25%, #293755 0 50%) 0 0 / 4px 4px; padding: 8px 8px 0; display: flex; gap: 9px; }
.leftcol { width: 1339px; display: flex; flex-direction: column; gap: 8px; flex: none; }
.editor { height: 608px; flex: none; display: flex; flex-direction: column; }
.tabstrip { height: 25px; display: flex; align-items: stretch; flex: none; }
.doctab { width: 132px; background: linear-gradient(#fffdf7, #fff5d8 55%, #ffe9ac); border-radius: 3px 3px 0 0; display: flex; align-items: center; padding-left: 5px; color: #111; font-size: 15.5px; }
.docx { width: 11px; height: 11px; margin-left: 12px; flex: none; }
.doctab2 { margin-left: auto; margin-right: 223px; display: flex; align-items: center; gap: 7px; color: #cdd5e4; font-size: 15px; }
.lockic { width: 10px; height: 13px; }
.tabstrip .tri { align-self: center; margin-right: 6px; }
.tri { display: block; width: 0; height: 0; border-left: 5px solid transparent; border-right: 5px solid transparent; border-top: 6px solid #d4dbe7; text-decoration: none; }
.yband { height: 6px; flex: none; background: linear-gradient(#ffe7a2, #ffe29a); }
.editmain { flex: 1; min-height: 0; display: flex; background: #fff; }
.codewrap { flex: 1; min-width: 0; overflow: hidden; background: linear-gradient(90deg, #f0f0f0 21px, #fff 21px); position: relative; }
.changebar { position: absolute; left: 25px; top: 383px; width: 6px; height: 63px; background: #6fdf6a; }
.code { padding: 1px 0 0 21px; }
.ln { height: 21.2px; display: flex; align-items: center; white-space: pre; }
.g { width: 27px; height: 100%; flex: none; position: relative; display: block; }
.g.ln-v::before, .g.box::before { content: ""; position: absolute; left: 17px; top: 0; bottom: 0; width: 2px; background: #a9a9a9; }
.ln:nth-child(2) .g.box::before { top: 50%; }
.g.end::after { content: ""; position: absolute; left: 18px; top: 50%; width: 5px; height: 1px; background: #a9a9a9; }
.g.box::after { content: ""; position: absolute; left: 13px; top: 5px; width: 11px; height: 11px; background: linear-gradient(#6e6e6e, #6e6e6e) center / 7px 1px no-repeat #fff; border: 1px solid #a5a5a5; }
code { font-family: "Liberation Mono", monospace; font-size: 15px; line-height: 21px; }
em { font-style: normal; }
.b { color: #0000ff; }
.n { color: #a31515; }
.a { color: #ff0000; }
.c { color: #008000; }
.vscroll { width: 20px; flex: none; display: flex; flex-direction: column; background: #f0f0f0; }
.splitbtn { height: 20px; background: #d7dde8; border: 1px solid #8f9bb3; flex: none; display: flex; align-items: center; justify-content: center; }
.splitbtn svg { width: 16px; height: 16px; }
.arr { height: 21px; flex: none; display: flex; align-items: center; justify-content: center; }
.arr svg { width: 11px; height: 8px; }
.vthumb { height: 168px; flex: none; background: #c9c9c9; }
.vrest { flex: 1; }
.hbar { height: 21px; flex: none; display: flex; background: #f0f0f0; }
.zoomcombo { width: 74px; margin-left: 1px; background: #fff; display: flex; align-items: center; justify-content: space-between; padding-left: 4px; font-size: 15px; }
.zoomcombo .dd { width: 18px; }
.harr { width: 22px; display: flex; align-items: center; justify-content: center; }
.harr svg { width: 8px; height: 11px; }
.harr-r { margin-right: 20px; }
.hthumb { width: 210px; background: #c8c8c8; }
.hrest { flex: 1; }
.yband2 { height: 5px; flex: none; background: #ffe29a; }

.lower { flex: none; height: 250px; display: flex; gap: 8px; }
.dock { display: flex; flex-direction: column; height: 250px; }
.dock-l { width: 676px; flex: none; }
.dock-r { flex: 1; min-width: 0; }
.panel { height: 225px; flex: none; display: flex; flex-direction: column; background: #fff; }
.phead { height: 25px; flex: none; background: linear-gradient(#4f6287, #3c4f77); border-radius: 3px 3px 0 0; color: #eef2f8; display: flex; align-items: center; padding: 0 0 2px 2px; font-size: 15px; }
.ptools { margin-left: auto; display: flex; align-items: center; gap: 10px; padding-right: 6px; }
.pinic { width: 8px; height: 14px; }
.xic { width: 11px; height: 11px; }
.errbar { height: 33px; flex: none; background: #b9c5d8; display: flex; align-items: center; padding-left: 5px; }
.errbtn { width: 96px; height: 27px; background: #ffeebb; border: 1px solid #e5c365; display: flex; align-items: center; padding-left: 3px; gap: 7px; font-size: 15px; white-space: nowrap; }
.errbtn svg { width: 18px; height: 18px; flex: none; }
.esep { width: 1px; height: 22px; background: #8f9ab0; margin: 0 6px 0 4px; flex: none; }
.warnic { width: 20px; height: 19px; margin-left: 1px; }
.errgrid { flex: 1; min-height: 0; overflow: hidden; background: linear-gradient(#f0f0f0, #f0f0f0) 16px 0 / 1px 100% no-repeat, linear-gradient(#f0f0f0, #f0f0f0) 35px 0 / 1px 100% no-repeat, linear-gradient(#f0f0f0, #f0f0f0) 295px 0 / 1px 100% no-repeat, linear-gradient(#f0f0f0, #f0f0f0) 414px 0 / 1px 100% no-repeat, linear-gradient(#f0f0f0, #f0f0f0) 485px 0 / 1px 100% no-repeat, #fff; }
.errhead { height: 26px; padding-left: 42px; line-height: 26px; font-size: 15px; border-bottom: 1px solid #eee; }
.row { height: 25px; border-bottom: 1.500px solid #f0f0f0; }
.btabs { height: 25px; flex: none; display: flex; align-items: center; color: #eef2f8; }
.btab { height: 25px; display: flex; align-items: center; padding: 0 8px 2px 6px; gap: 6px; white-space: nowrap; font-size: 15px; }
.btab svg { width: 19px; height: 19px; flex: none; }
.btab.on { background: #fff; color: #111; border-radius: 0 0 3px 3px; padding-left: 5px; }
.callbody { flex: 1; min-height: 0; display: flex; padding-bottom: 2px; }
.callmain { flex: 1; min-width: 0; }
.callhead { height: 26px; background: #fafafa; border-bottom: 1.500px solid #ddd; display: flex; color: #9a9a9a; overflow: hidden; }
.c1 { width: 603px; flex: none; border-right: 1px solid #ddd; margin-right: 2px; }
.c2 { padding-left: 3px; line-height: 24px; white-space: nowrap; }
.vs2 { width: 21px; flex: none; background: #f0f0f0; display: flex; flex-direction: column; justify-content: space-between; align-items: center; padding: 8px 0; }
.vs2 svg { width: 11px; height: 8px; }

.props { width: 556px; flex: none; height: 865px; display: flex; flex-direction: column; background: #fff; }
.objcombo { height: 31px; flex: none; background: #fff; border-top: 3px solid #c5d0e0; border-bottom: 2px solid #eef1f6; display: flex; align-items: center; padding-left: 10px; font-size: 15.5px; }
.objbtn { margin-left: auto; width: 12px; height: 25px; background: #f0f0f0; margin-right: 3px; display: flex; }
.objbtn .dd { width: 12px; }
.proptb { height: 27px; flex: none; background: #b9c5d8; display: flex; align-items: center; padding-left: 3px; }
.ptbtn { width: 22px; height: 22px; display: flex; align-items: center; justify-content: center; border: 1px solid transparent; margin-right: 1px; }
.ptbtn svg { width: 18px; height: 18px; }
.ptbtn.on { background: #ffeebb; border-color: #e5c365; }
.propgrid { flex: 1; min-height: 0; border-top: 1px solid #8f9399; border-left: 1px solid #aab; }
.pcat { height: 24px; background: #f0f0f0; display: flex; align-items: center; color: #a6aebb; padding: 0 0 2px 6px; gap: 11px; font-size: 15px; }
.pcat svg { width: 9px; height: 6px; }
.prow { height: 23px; display: flex; background: linear-gradient(90deg, #f0f0f0 21px, #fff 21px); border-bottom: 1px solid #f0f0f0; }
.pk { width: 268px; flex: none; padding-left: 26px; line-height: 22px; border-right: 1px solid #f0f0f0; font-size: 15px; white-space: nowrap; }
.pv { padding-left: 3px; font-weight: bold; line-height: 21px; font-size: 15.5px; color: #000; }
.prow.sel { background: #f0f0f0; }
.prow.sel .pv { background: #fff; flex: 1; }
.propdesc { height: 71px; flex: none; background: #dde0e9; border-top: 3px double #a2a5ad; border-left: 1px solid #888; border-right: 1px solid #888; border-bottom: 1px solid #888; padding: 1px 6px; font-size: 14.500px; }
.propdesc strong { display: block; line-height: 22px; }
.propdesc p { margin: 1px 0 0; line-height: 22px; }

.status { height: 30px; flex: none; background: #2a3854; color: #e7ebf2; display: flex; align-items: center; padding: 0 0 2px 5px; font-size: 15px; }
.st1 { margin-left: 1442px; width: 115px; }
.st2 { width: 115px; }
.st3 { width: 170px; }

.formwin { position: absolute; left: 140px; top: 131px; width: 940px; height: 696px; display: flex; flex-direction: column; background: #efefef; box-shadow: -1px 0 0 #8d8d8d, 0 2px 12px rgba(0,0,0,.4); }
.formtitle { height: 38px; background: #fff; flex: none; display: flex; align-items: center; padding-left: 11px; color: #a2a2a2; font-size: 15px; }
.formtitle > span { padding-bottom: 2px; }
.formic { width: 17px; height: 17px; margin-right: 7px; }
.formctl { margin-left: auto; display: flex; align-items: center; padding-right: 24px; gap: 46px; }
.fm { width: 12px; height: 1px; background: #8a8a8a; }
.fx { width: 12px; height: 12px; border: 1px solid #8a8a8a; }
.formctl svg { width: 12px; height: 12px; }
.formbody { flex: 1; min-height: 0; position: relative; padding: 12px 0 0 11px; }
.rulerbox { width: 557px; height: 478px; background: #fff; display: flex; flex-direction: column; }
.rtop { height: 22px; flex: none; display: flex; }
.corner { width: 23px; flex: none; background: #f0f0f0; border-right: 1px solid #888; border-bottom: 1px solid #666; display: flex; align-items: center; justify-content: center; }
.corner i { width: 9px; height: 8px; border-left: 3px solid #111; border-bottom: 3px solid #111; display: block; }
.hruler { flex: 1; min-width: 0; display: flex; overflow: hidden; border-bottom: 1px solid #555; margin-right: 23px; background-color: #fff; background-image: linear-gradient(90deg, #333 1px, transparent 1px), linear-gradient(90deg, #333 1px, transparent 1px); background-size: 6.25px 6px, 31.25px 11px; background-repeat: repeat-x; background-position: 0 100%, 0 100%; }
.hruler span { width: 62.500px; flex: none; border-left: 1px solid #333; font: 13.500px/15px "Liberation Mono", monospace; color: #6f6f6f; height: 22px; }
.rmid { flex: 1; min-height: 0; display: flex; }
.vruler { width: 23px; flex: none; overflow: hidden; border-right: 1px solid #555; background-color: #fff; background-image: linear-gradient(#333 1.5px, transparent 1.5px), linear-gradient(#333 1.5px, transparent 1.5px); background-size: 6px 6.25px, 10px 31.25px; background-repeat: repeat-y; background-position: 100% 2px, 100% 20.750px; }
.vruler span { display: flex; height: 62.500px; align-items: flex-end; border-bottom: 1px solid #333; width: 22px; background: none; }
.vruler span.v1 { height: 53px; }
.vruler em { writing-mode: vertical-rl; transform: rotate(180deg); font: 14px/14px "Liberation Mono", monospace; color: #6f6f6f; margin-left: 2px; white-space: nowrap; }
.canvas { flex: 1; min-width: 0; display: flex; align-items: flex-end; justify-content: flex-end; padding: 0 10px 4px 0; background: #fff; }
.lic { font-size: 17.500px; line-height: 24px; color: #222; white-space: nowrap; }
.sbv { width: 21px; flex: none; display: flex; flex-direction: column; margin-right: 2px; padding-bottom: 1px; background: #ececec; border-right: 1px solid #ddd; }
.sbv .sbtn { height: 21px; }
.sbv .sthumb { height: 21px; margin-top: 0; }
.strack { flex: 1; }
.sbtn { background: #f0f0f0; box-shadow: inset 1px 1px 0 #fff, inset -2px -2px 0 #8a8a8a; display: flex; align-items: center; justify-content: center; flex: none; }
.sthumb { background: #f0f0f0; box-shadow: inset 1px 1px 0 #fff, inset -1px -1px 0 #9a9a9a; flex: none; }
.sbtn u { width: 0; height: 0; border-left: 5px solid transparent; border-right: 5px solid transparent; border-top: 5px solid #000; }
.sbtn u.up { border-top: 0; border-bottom: 5px solid #000; }
.sbtn u.lf { border: 5px solid transparent; border-left: 0; border-right: 6px solid #000; }
.sbtn u.rt { border: 5px solid transparent; border-right: 0; border-left: 6px solid #000; }
.rbot { height: 22px; flex: none; padding-left: 23px; padding-right: 23px; }
.sbh { display: flex; height: 20px; background: #ececec; border-bottom: 1px solid #ddd; }
.sbh .sbtn, .sbh .sthumb { width: 21px; }
.btn1 { position: absolute; left: 681px; top: 45px; width: 67px; height: 20px; border: 2px solid #0a7ad6; background: #e1e1e1; font: bold 12px/17px "Liberation Mono", monospace; color: #000; text-align: center; }

.netspeed { position: absolute; left: 1711px; top: 174px; width: 105px; height: 53px; background: rgba(44,46,51,.93); border: 1px solid #4a4d52; border-radius: 2px; padding: 2px 0 0 10px; font-size: 15px; }
.netspeed div { display: flex; gap: 5px; height: 23px; align-items: center; }
.netspeed .ar { font-size: 17px; line-height: 1; font-family: "Liberation Sans", sans-serif; }
.netspeed .up { color: #e98a15; }
.netspeed .down { color: #6fc928; }
```
